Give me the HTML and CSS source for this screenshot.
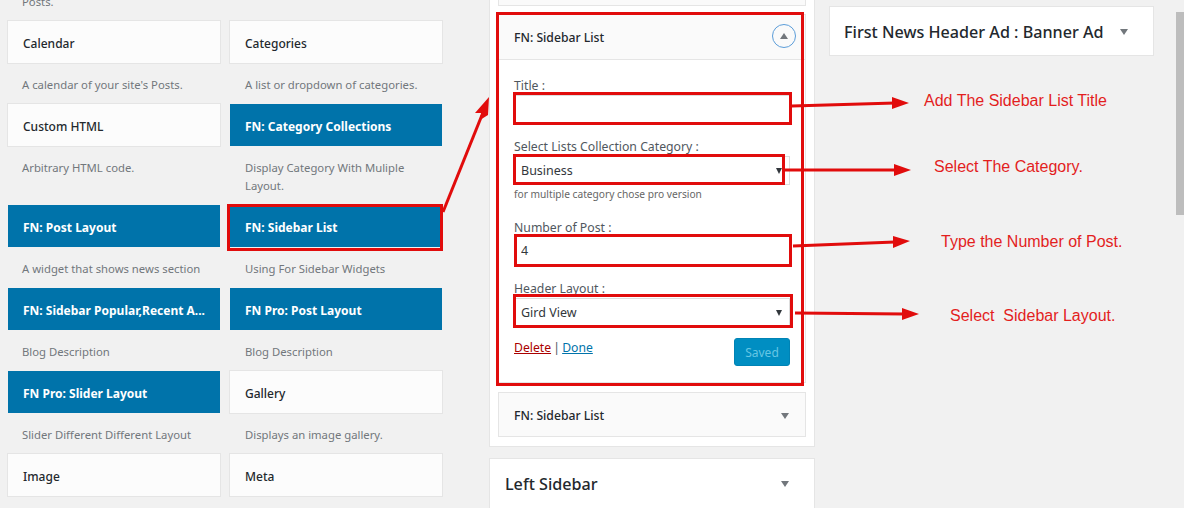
FILE: index.html
```html
<!DOCTYPE html>
<html lang="en">
  <head>
    <meta charset="utf-8" />
    <title>Widgets</title>
    <link rel="stylesheet" href="styles.css">
  </head>
  <body>

<div class="page">

  <!-- available widgets -->
  <div class="available">
    <div class="cell"><div class="tile hidden-tile"></div><p class="desc">Posts.</p></div>
    <div class="cell"></div>

    <div class="cell"><div class="tile">Calendar</div><p class="desc">A calendar of your site's Posts.</p></div>
    <div class="cell"><div class="tile">Categories</div><p class="desc">A list or dropdown of categories.</p></div>

    <div class="cell"><div class="tile">Custom HTML</div><p class="desc">Arbitrary HTML code.</p></div>
    <div class="cell"><div class="tile blue">FN: Category Collections</div><p class="desc">Display Category With Muliple Layout.</p></div>

    <div class="cell"><div class="tile blue">FN: Post Layout</div><p class="desc">A widget that shows news section</p></div>
    <div class="cell"><div class="tile blue">FN: Sidebar List</div><p class="desc">Using For Sidebar Widgets</p></div>

    <div class="cell"><div class="tile blue">FN: Sidebar Popular,Recent A...</div><p class="desc">Blog Description</p></div>
    <div class="cell"><div class="tile blue">FN Pro: Post Layout</div><p class="desc">Blog Description</p></div>

    <div class="cell"><div class="tile blue">FN Pro: Slider Layout</div><p class="desc">Slider Different Different Layout</p></div>
    <div class="cell"><div class="tile">Gallery</div><p class="desc">Displays an image gallery.</p></div>

    <div class="cell"><div class="tile">Image</div></div>
    <div class="cell"><div class="tile">Meta</div></div>
  </div>

  <!-- middle sidebars -->
  <div class="middle">
    <div class="panel panel-top">
      <div class="stub"></div>

      <div class="widget open">
        <div class="widget-head">
          <span>FN: Sidebar List</span>
          <span class="toggle"><i class="arrow up"></i></span>
        </div>
        <div class="widget-body">
          <label class="field-label">Title :</label>
          <input class="field" type="text">

          <label class="field-label second">Select Lists Collection Category :</label>
          <div class="select-wrap">
            <select class="field"><option>Business</option></select>
          </div>
          <p class="hint">for multiple category chose pro version</p>

          <label class="field-label third">Number of Post :</label>
          <input class="field number" type="text" value="4">

          <label class="field-label fourth">Header Layout :</label>
          <div class="select-wrap">
            <select class="field"><option>Gird View</option></select>
          </div>

          <div class="actions">
            <span class="links"><a class="delete" href="#">Delete</a> | <a class="done" href="#">Done</a></span>
            <button class="saved">Saved</button>
          </div>
        </div>
      </div>

      <div class="widget closed">
        <span>FN: Sidebar List</span>
        <i class="arrow"></i>
      </div>
    </div>

    <div class="panel panel-left">
      <h2>Left Sidebar</h2>
      <i class="arrow"></i>
    </div>
  </div>

  <!-- right column -->
  <div class="right">
    <div class="panel panel-ad">
      <h2>First News Header Ad : Banner Ad</h2>
      <i class="arrow"></i>
    </div>
  </div>

</div>

<div class="scrollbar"></div>

<!-- red notes drawn on top of the screenshot -->
<svg class="notes" width="1184" height="508" viewBox="0 0 1184 508">
  <g fill="none" stroke="#e10c0c" stroke-width="3">
    <rect x="228.5" y="205.5" width="213" height="44"/>
    <rect x="497.5" y="13.5" width="305" height="371"/>
    <rect x="514.5" y="93.5" width="276" height="30"/>
    <rect x="514.5" y="155.5" width="269" height="28"/>
    <rect x="515.5" y="235.5" width="275" height="30"/>
    <rect x="514.5" y="295.5" width="277" height="31"/>
    <line x1="443" y1="212" x2="482" y2="115"/>
    <line x1="792" y1="106" x2="895" y2="103"/>
    <line x1="783" y1="170" x2="897" y2="170"/>
    <line x1="793" y1="246" x2="895" y2="242"/>
    <line x1="795" y1="313" x2="905" y2="314"/>
  </g>
  <g fill="#e10c0c">
    <polygon points="489,97 475,113 481,113 480,120 488,115"/>
    <polygon points="909,103 892,97 892,109"/>
    <polygon points="911,170 894,164 894,176"/>
    <polygon points="910,241 893,236 893,248"/>
    <polygon points="919,314 902,308 902,320"/>
  </g>
  <g class="note-text">
    <text x="924" y="106">Add The Sidebar List Title</text>
    <text x="934" y="172">Select The Category.</text>
    <text x="941" y="247">Type the Number of Post.</text>
    <text x="950" y="321" xml:space="preserve">Select  Sidebar Layout.</text>
  </g>
</svg>

  </body>
</html>
```

FILE: styles.css
```css
html{
	background-color: #f1f1f1;
}

body{
	margin: 0;
	width: 1184px;
	height: 508px;
	overflow: hidden;
	position: relative;
	font-family: "Noto Sans", sans-serif;
	font-size: 12px;
	color: #23282d;
}

.page{
	display: flex;
	align-items: flex-start;
}

/* left grid */
.available{
	display: grid;
	grid-template-columns: 214px 214px;
	column-gap: 8px;
	margin-top: -63px;
	margin-left: 7px;
	width: 436px;
	flex: none;
}

.tile{
	height: 42px;
	line-height: 46px;
	padding-left: 15px;
	background-color: #fcfcfc;
	border: 1px solid #e5e5e5;
	font-weight: 500;
	white-space: nowrap;
	overflow: hidden;
}

.tile.blue{
	background-color: #0073aa;
	border-color: #f1f1f1;
	color: #fff;
	font-weight: 700;
}

.hidden-tile{
	visibility: hidden;
}

.desc{
	margin: 0;
	padding: 12px 15px 9px;
	line-height: 18px;
	color: #72777c;
	font-size: 11.3px;
}

.cell:nth-child(even) .desc{
	padding-left: 16px;
}

/* middle column */
.middle{
	width: 326px;
	margin-left: 46px;
	flex: none;
}

.panel{
	background-color: #fff;
	border: 1px solid #e5e5e5;
	box-sizing: border-box;
}

.panel h2{
	margin: 0;
	font-size: 16.15px;
	font-weight: 500;
	line-height: 22px;
}

.panel-top{
	height: 448px;
	padding: 0 8px;
	margin-top: -1px;
}

.stub{
	height: 5px;
	border: 1px solid #e5e5e5;
	border-top: 0;
	background-color: #fafafa;
	margin-bottom: 8px;
}

.widget{
	border: 1px solid #e5e5e5;
	background-color: #fafafa;
}

.widget-head{
	height: 44px;
	display: flex;
	align-items: center;
	justify-content: space-between;
	padding: 0 9px 0 15px;
	border-bottom: 1px solid #e5e5e5;
	font-size: 12.2px;
	font-weight: 500;
}

.toggle{
	width: 22px;
	height: 22px;
	margin-top: -2px;
	border: 1px solid #5b9dd9;
	border-radius: 50%;
	display: flex;
	align-items: center;
	justify-content: center;
}

.widget-body{
	background-color: #fff;
	height: 305px;
	padding: 17px 15px 0;
}

.field-label{
	display: block;
	line-height: 18px;
	font-size: 12.25px;
	color: #50575e;
}

.field-label.second{
	margin-top: 14px;
}

.field-label.third{
	margin-top: 16px;
}

.field-label.fourth{
	margin-top: 15px;
}

.field{
	display: block;
	width: 276px;
	height: 29px;
	box-sizing: border-box;
	margin: 0;
	padding: 0 6px;
	border: 1px solid #ddd;
	background-color: #fff;
	font-family: "Noto Sans", sans-serif;
	font-size: 12.5px;
	color: #32373c;
	appearance: none;
	border-radius: 0;
}

.field.number{
	margin-top: -1px;
}

.select-wrap{
	position: relative;
	width: 276px;
}

.select-wrap::after{
	content: "";
	position: absolute;
	right: 8px;
	top: 12px;
	border-left: 3.5px solid transparent;
	border-right: 3.5px solid transparent;
	border-top: 6px solid #32373c;
}

.hint{
	margin: 0;
	line-height: 18px;
	font-size: 10.2px;
	color: #666;
}

.actions{
	display: flex;
	justify-content: space-between;
	align-items: flex-start;
	margin-top: 12px;
	width: 276px;
}

.links{
	color: #50575e;
	line-height: 18px;
	font-size: 12.2px;
	word-spacing: -1px;
}

.delete{
	color: #a00;
}

.done{
	color: #0073aa;
}

.saved{
	width: 56px;
	height: 28px;
	padding: 0;
	margin-top: -1px;
	background-color: #008ec2;
	border: 1px solid #0083b5;
	border-radius: 3px;
	color: #66c6e4;
	font-family: "Noto Sans", sans-serif;
	font-size: 12px;
}

.widget.closed{
	height: 45px;
	box-sizing: border-box;
	margin-top: 9px;
	display: flex;
	align-items: center;
	justify-content: space-between;
	padding: 2px 16px 0 15px;
	font-size: 12.2px;
	font-weight: 500;
}

.panel-left{
	margin-top: 11px;
	height: 60px;
	display: flex;
	align-items: center;
	justify-content: space-between;
	padding: 0 25px 8px 15px;
}

.right{
	margin-left: 14px;
	margin-top: 6px;
	width: 325px;
	flex: none;
}

.panel-ad{
	height: 50px;
	display: flex;
	align-items: center;
	padding: 2px 25px 0 14px;
	justify-content: space-between;
}

.arrow{
	display: block;
	width: 0;
	height: 0;
	border-left: 4.5px solid transparent;
	border-right: 4.5px solid transparent;
	border-top: 6px solid #72777c;
}

.arrow.up{
	border-top: 0;
	border-bottom: 6px solid #72777c;
}

.scrollbar{
	position: absolute;
	right: 0;
	top: 12px;
	width: 8px;
	height: 203px;
	background-color: #bdbdbd;
}

.notes{
	position: absolute;
	left: 0;
	top: 0;
}

.note-text{
	font-family: "Liberation Sans", Arial, sans-serif;
	font-size: 16px;
	fill: #e31e1e;
}
```
